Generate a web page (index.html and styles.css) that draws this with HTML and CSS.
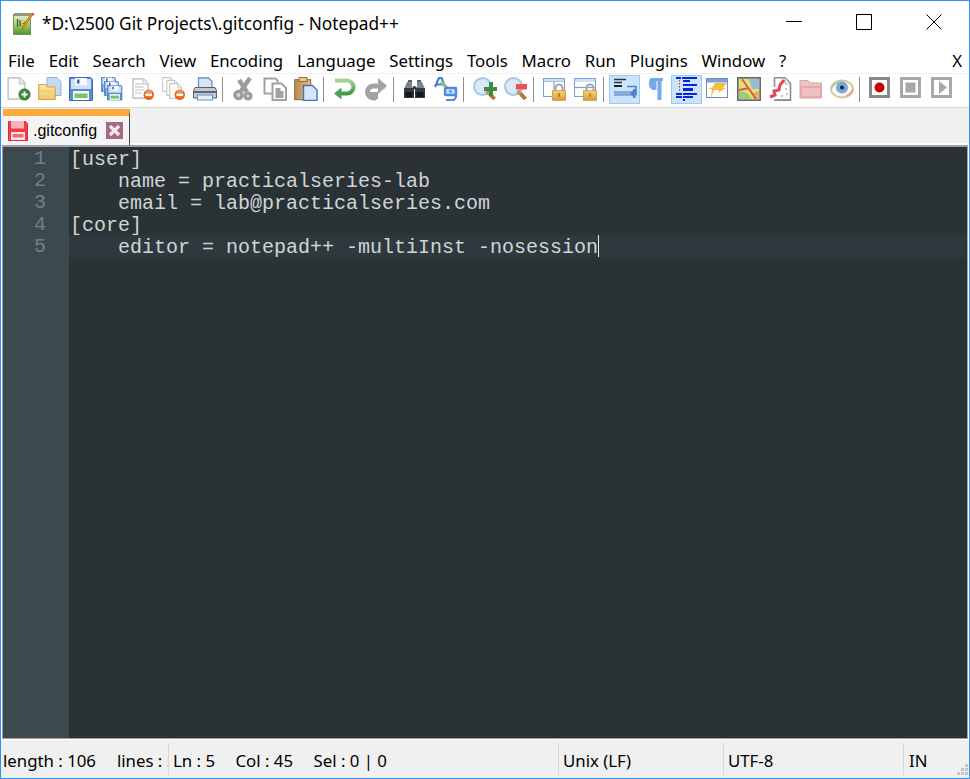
FILE: index.html
```html
<!DOCTYPE html>
<html lang="en">
<head>
<meta charset="utf-8">
<title>*D:\2500 Git Projects\.gitconfig - Notepad++</title>
<link rel="stylesheet" href="styles.css">
</head>
<body>
<svg class="defs" width="0" height="0" aria-hidden="true">
  <defs>
    <linearGradient id="appg" x1="0" y1="0" x2="0" y2="1"><stop offset="0" stop-color="#e8efe0"/><stop offset=".45" stop-color="#b4d26a"/><stop offset="1" stop-color="#3f9a2e"/></linearGradient>
    <linearGradient id="lockg" x1="0" y1="0" x2="0" y2="1"><stop offset="0" stop-color="#f4d77d"/><stop offset="1" stop-color="#d99a36"/></linearGradient>
    <linearGradient id="fold" x1="0" y1="0" x2="0" y2="1"><stop offset="0" stop-color="#fdeaa8"/><stop offset="1" stop-color="#f3c766"/></linearGradient>
    <linearGradient id="clip" x1="0" y1="0" x2="1" y2="0"><stop offset="0" stop-color="#b9884f"/><stop offset="1" stop-color="#e7bd84"/></linearGradient>
    <linearGradient id="grn" x1="0" y1="0" x2="0" y2="1"><stop offset="0" stop-color="#a6d39a"/><stop offset="1" stop-color="#3f9a48"/></linearGradient>
    <symbol id="floppy" viewBox="0 0 24 24">
      <path d="M.5.5h21l2 2v21H.5z" fill="#5a8bd0" stroke="#3d6cb4"/>
      <rect x="2" y="2" width="20" height="10" fill="#cfe0f6"/>
      <rect x="6" y="1" width="12" height="7.5" fill="#f4f8fd"/>
      <rect x="8" y="2.5" width="2.5" height="4" fill="#44659a"/>
      <rect x="4" y="14" width="16" height="9" fill="#f4f8f0"/>
      <rect x="5.500" y="16.500" width="13" height="4.500" fill="#7cc26b"/>
    </symbol>
    <symbol id="page" viewBox="0 0 16 20">
      <path d="M.8.8h10l4.400 4.400v14H.8z" fill="#fff" stroke="#c9c9c9" stroke-width="1.500"/>
      <path d="M10.500 1v5h5" fill="#ececec" stroke="#c9c9c9"/>
    </symbol>
    <symbol id="nogo" viewBox="0 0 12 12">
      <circle cx="6" cy="6" r="5.500" fill="#e4671a"/>
      <circle cx="6" cy="4.500" r="3.500" fill="#f0935a"/>
      <rect x="2.500" y="5" width="7" height="2.200" fill="#fff"/>
    </symbol>
    <symbol id="lock" viewBox="0 0 16 20">
      <path d="M4 9V5.500a4 4 0 0 1 8 0V9" fill="none" stroke="#a8a8a8" stroke-width="2.400"/>
      <rect x=".5" y="8.500" width="15" height="11" fill="url(#lockg)" stroke="#d49a3c"/>
      <rect x="6.800" y="11.500" width="2.400" height="4" fill="#b57e2b"/>
    </symbol>
    <symbol id="lens" viewBox="0 0 24 24">
      <circle cx="9.500" cy="9.500" r="8.500" fill="#dbe8f8" stroke="#a9c6ea" stroke-width="2"/>
      <path d="M14 14l7.500 8" stroke="#a87744" stroke-width="4"/>
      <circle cx="15" cy="15.500" r="2.400" fill="#c29a6a"/>
    </symbol>
  </defs>
</svg>
<div class="window">
  <header class="titlebar">
    <svg class="appicon" viewBox="0 0 22 23" width="22" height="23">
      <rect x=".5" y="2.500" width="17" height="20" fill="url(#appg)" stroke="#7c8a66"/>
      <rect x="1" y="1" width="16" height="3" fill="#8f9a80"/>
      <path d="M4.500 7v8M7 8v6" stroke="#454f3c" stroke-width="1.200"/>
      <path d="M9.500 11.500h4M11.500 9.500v4" stroke="#6a7a55" stroke-width=".9"/>
      <path d="M20.500 1.500L11 16l-2.500 2.500L9.500 15l9-14z" fill="#e9a32c" stroke="#a86f1d" stroke-width=".8"/>
      <path d="M19 .8l2.500 1.500-1 1.500L18 2.300z" fill="#d8574a"/>
    </svg>
    <div class="title">*D:\2500 Git Projects\.gitconfig - Notepad++</div>
    <div class="controls">
      <div class="ctl"><svg viewBox="0 0 16 16" width="16" height="16"><path d="M0 7.500h16" stroke="#000"/></svg></div>
      <div class="ctl"><svg viewBox="0 0 16 16" width="16" height="16"><rect x=".5" y=".5" width="15" height="15" fill="none" stroke="#000"/></svg></div>
      <div class="ctl"><svg viewBox="0 0 16 16" width="16" height="16"><path d="M.5.500l15 15M15.500.5l-15 15" stroke="#000" fill="none"/></svg></div>
    </div>
  </header>

  <nav class="menubar">
    <span>File</span><span>Edit</span><span>Search</span><span>View</span><span>Encoding</span><span>Language</span><span>Settings</span><span>Tools</span><span>Macro</span><span>Run</span><span>Plugins</span><span>Window</span><span>?</span>
    <span class="menu-x">X</span>
  </nav>

  <div class="toolbar">
    <button class="tb" aria-label="New"><svg viewBox="0 0 24 24"><use href="#page" x="0" y="0" width="19" height="23"/><circle cx="17.500" cy="17.500" r="5.500" fill="#3f8a3a" stroke="#2c6a2c"/><path d="M14.500 17.500h6M17.500 14.500v6" stroke="#fff" stroke-width="1.800"/></svg></button>
    <button class="tb" aria-label="Open"><svg viewBox="0 0 24 24"><path d="M9 .5h10l4 4v14H9z" fill="#c4d9f3" stroke="#8fb3e0"/><path d="M.7 10.500V7.500h7l1.500 2.500h8v12.500H.7z" fill="url(#fold)" stroke="#dca24a" stroke-width="1.200"/><path d="M1 14h16.500" stroke="#eec067"/></svg></button>
    <button class="tb" aria-label="Save"><svg viewBox="0 0 24 24"><use href="#floppy"/></svg></button>
    <button class="tb" aria-label="Save All"><svg viewBox="0 0 24 24"><use href="#floppy" x="1" y="0" width="15" height="15"/><use href="#floppy" x="4" y="4" width="15" height="15"/><use href="#floppy" x="7" y="8" width="15.500" height="15.500"/></svg></button>
    <button class="tb" aria-label="Close"><svg viewBox="0 0 24 24"><use href="#page" x="1" y="1" width="17" height="21"/><path d="M4 7h7M4 10h9M4 13h9M4 16h7" stroke="#bdbdbd" stroke-width="1.200"/><use href="#nogo" x="12" y="12" width="11.500" height="11.500"/></svg></button>
    <button class="tb" aria-label="Close All"><svg viewBox="0 0 24 24"><use href="#page" x="0" y="0" width="12" height="15"/><use href="#page" x="4" y="3" width="13" height="16"/><use href="#page" x="7" y="6" width="13" height="16"/><use href="#nogo" x="12" y="12" width="11.500" height="11.500"/></svg></button>
    <button class="tb" aria-label="Print"><svg viewBox="0 0 24 24"><path d="M5.500 1h10l3.500 3.500V12h-13.500z" fill="#d8e6f7" stroke="#5f94d2" stroke-width="1.300"/><path d="M2 10.500h20l1.500 3v7.500H.5v-7.500z" fill="#c9c9c9" stroke="#5e5e5e"/><path d="M1 14h22v2H1z" fill="#5e6770"/><rect x="4.500" y="18" width="15" height="5" fill="#e8f0f8" stroke="#5f94d2"/></svg></button>
    <span class="sep"></span>
    <button class="tb" aria-label="Cut"><svg viewBox="0 0 24 24"><path d="M18 1L9 14M7 3l8 12" stroke="#9c9c9c" stroke-width="4.400" fill="none"/><circle cx="6.500" cy="18" r="3.600" fill="#d8d8d8" stroke="#9c9c9c" stroke-width="3.400"/><circle cx="16" cy="19" r="3" fill="#d8d8d8" stroke="#9c9c9c" stroke-width="3.200"/></svg></button>
    <button class="tb" aria-label="Copy"><svg viewBox="0 0 24 24"><path d="M1.500 1.500h11l2 2v13h-13z" fill="#fff" stroke="#a2a2a2" stroke-width="2"/><path d="M9.500 6.500h9l4.500 4.500v12h-13.500z" fill="#fff" stroke="#a2a2a2" stroke-width="2"/><path d="M12.500 11h5v3h3v7h-8z" fill="#a2a2a2"/></svg></button>
    <button class="tb" aria-label="Paste"><svg viewBox="0 0 24 24"><rect x=".7" y="2.700" width="16" height="20" fill="url(#clip)" stroke="#8f6a3e"/><rect x="5" y="0.500" width="8" height="4" fill="#ebcf76" stroke="#8f7440"/><path d="M9.500 8.500h9l4.500 4.500v10.500H9.500z" fill="#d8e6f9" stroke="#3f74c2" stroke-width="1.400"/></svg></button>
    <span class="sep"></span>
    <button class="tb" aria-label="Undo"><svg viewBox="0 0 24 24"><path d="M2 3.500h12a6.500 6.500 0 0 1 0 13H7" fill="none" stroke="url(#grn)" stroke-width="4.200"/><path d="M8.500 10.500v12L1 16.500z" fill="#4aa254"/></svg></button>
    <button class="tb" aria-label="Redo"><svg viewBox="0 0 24 24"><path d="M21 9H9.500a6 6 0 0 0 0 12h3" fill="none" stroke="#a3a3a3" stroke-width="5"/><path d="M14 1l9 8-9 8z" fill="#a3a3a3"/><rect x="5" y="15" width="9" height="7" fill="#a3a3a3"/></svg></button>
    <span class="sep"></span>
    <button class="tb" aria-label="Find"><svg viewBox="0 0 24 24"><path d="M4 5h5v5h5V5h5l3 7H1z" fill="#7b848a"/><path d="M5 3h4v2H5zM14 3h4v2h-4z" fill="#5a6066"/><path d="M1 11h10v10H1zM12 11h10v10H12z" fill="#33393e"/><path d="M2.500 15h7v5h-7zM13.500 15h7v5h-7z" fill="#15181a"/><path d="M10.500 9h2v3h-2z" fill="#222"/></svg></button>
    <button class="tb" aria-label="Replace"><svg viewBox="0 0 24 24"><path d="M1 10L5 .8h2.500l3 7.500M2.500 7.500h7" fill="none" stroke="#3f80d8" stroke-width="2.200"/><path d="M7 5l7 7" stroke="#8fc07a" stroke-width="3.200"/><rect x="11" y="11" width="11" height="7" rx="1" fill="#cfe0f6" stroke="#4e8be0" stroke-width="2.400"/><path d="M22 10v10l-2 3h-8M15 14.500h3" fill="none" stroke="#4e8be0" stroke-width="2.200"/></svg></button>
    <span class="sep"></span>
    <button class="tb" aria-label="Zoom In"><svg viewBox="0 0 24 24"><use href="#lens"/><path d="M11 10h5V5h4v5h4v4h-4v5h-4v-5h-5z" fill="#3e8a40"/></svg></button>
    <button class="tb" aria-label="Zoom Out"><svg viewBox="0 0 24 24"><use href="#lens"/><rect x="12" y="7" width="11" height="5.500" fill="#ef4e58"/></svg></button>
    <span class="sep"></span>
    <button class="tb" aria-label="Synchronize Vertical"><svg viewBox="0 0 24 24"><rect x=".5" y="1.500" width="21" height="18" fill="#fff" stroke="#7fa0d4"/><path d="M1 4.500h20M11 2v17" stroke="#7fa0d4" stroke-width="1.200"/><rect x="1" y="2" width="20" height="2.500" fill="#d2e0f3"/><use href="#lock" x="9" y="6" width="14" height="18"/></svg></button>
    <button class="tb" aria-label="Synchronize Horizontal"><svg viewBox="0 0 24 24"><rect x=".5" y="1.500" width="21" height="18" fill="#fff" stroke="#7fa0d4"/><path d="M1 10.500h20" stroke="#7fa0d4" stroke-width="1.200"/><rect x="1" y="2" width="20" height="3" fill="#d2e0f3"/><use href="#lock" x="9" y="6" width="14" height="18"/></svg></button>
    <span class="sep"></span>
    <button class="tb on" aria-label="Word Wrap"><svg viewBox="0 0 24 24"><path d="M1 2.500h12M1 5.500h8" stroke="#333" stroke-width="1.300"/><rect x="1" y="8" width="8" height="2" fill="#222"/><path d="M14 9.500h9v9" fill="none" stroke="#4a82cc" stroke-width="1.600"/><rect x="1" y="14" width="18" height="5" fill="#86abd9"/><path d="M17 16.500l3.500-3.500v7z" fill="#4a82cc"/><rect x="20" y="12" width="2.500" height="9" fill="#4a82cc"/></svg></button>
    <button class="tb" aria-label="Show All Characters"><svg viewBox="0 0 24 24"><path d="M7 1h12v3h-1.500v19h-4V4h-1v9H10C7 13 5 10.500 5 7s1-6 2-6z" fill="#74aae8"/></svg></button>
    <button class="tb on" aria-label="Indent Guide"><svg viewBox="0 0 24 24"><g fill="#0a24e0"><rect x="1" y="0" width="5" height="2"/><rect x="7" y="0" width="15" height="2"/><rect x="8" y="3" width="7" height="2"/><rect x="8" y="7" width="14" height="2"/><rect x="8" y="11" width="10" height="3"/><rect x="1" y="16" width="6" height="2"/><rect x="8" y="16" width="14" height="2"/><rect x="1" y="19" width="6" height="2"/><rect x="8" y="19" width="10" height="2"/><rect x="8" y="22" width="2" height="2"/></g><path d="M4.500 3v12" stroke="#d83030" stroke-dasharray="1.500 1.500"/></svg></button>
    <button class="tb" aria-label="Document Map"><svg viewBox="0 0 24 24"><rect x=".5" y="1.500" width="21" height="19" fill="#fff" stroke="#6b8fc4"/><rect x="1" y="2" width="20" height="3.500" fill="#7ea2d2"/><path d="M9 6h12l-4 5h3l-8 5 1-3H8l-3 8 1-9H2l5-2z" fill="#f1bf3e"/></svg></button>
    <button class="tb" aria-label="Document Map View"><svg viewBox="0 0 24 24"><rect x=".8" y=".8" width="22.400" height="22.400" fill="#dfe27a" stroke="#5c5c78" stroke-width="1.500"/><path d="M12 2h10v10H15z" fill="#98bad8"/><path d="M2 14l8 2 5 6H2z" fill="#9fcb74"/><path d="M16 16l6-2v8h-6z" fill="#e4b25c"/><path d="M5 2l14 20M2 13l10-2" stroke="#dd5b4e" stroke-width="2" fill="none"/></svg></button>
    <button class="tb" aria-label="Function List"><svg viewBox="0 0 24 24"><path d="M6 .8h11l5.500 5.500v17H6" fill="#fff" stroke="#8c8c8c" stroke-width="1.600"/><path d="M6.500 1v9M7 23h15" stroke="#8c8c8c" stroke-width="1.600"/><path d="M17 1v6h5" fill="#eee" stroke="#b5b5b5"/><path d="M2 20l5-2-1-4 5-1 1-5 4-5" fill="none" stroke="#e24a55" stroke-width="3"/><path d="M18 11v2M19 16v2M14 18v2" stroke="#a8c0a0" stroke-width="1.500"/></svg></button>
    <button class="tb" aria-label="Folder as Workspace"><svg viewBox="0 0 24 24"><path d="M1 5.500V3.500h8l2 2.500h11.500v15H1z" fill="#eec4c4" stroke="#d8a0a0"/><path d="M1.500 9h21v11.500h-21z" fill="#e6a9a9"/><path d="M3 11h18v8H3z" fill="#efc2c2"/></svg></button>
    <button class="tb" aria-label="Monitoring"><svg viewBox="0 0 24 24"><ellipse cx="12" cy="12" rx="11" ry="8.500" fill="#f8faf2" stroke="#d8c49c" stroke-width="1.800"/><path d="M1 12c3-6 7-8 11-8" stroke="#a9cdb0" stroke-width="1.800" fill="none"/><path d="M16 19c3-1 6-4 7-7" stroke="#e2a286" stroke-width="1.800" fill="none"/><circle cx="12" cy="10.500" r="6" fill="#7da6d8"/><circle cx="12" cy="10.500" r="2" fill="#16233a"/></svg></button>
    <span class="sep"></span>
    <button class="tb" aria-label="Start Recording"><svg viewBox="0 0 24 24"><rect x="1.500" y="1.500" width="18" height="18" fill="#fff" stroke="#888" stroke-width="3"/><circle cx="10.500" cy="10.500" r="5" fill="#c90000"/></svg></button>
    <button class="tb" aria-label="Stop Recording"><svg viewBox="0 0 24 24"><rect x="1.500" y="1.500" width="18" height="18" fill="#fff" stroke="#a8a8a8" stroke-width="3"/><rect x="5.500" y="5.500" width="10" height="10" fill="#a8a8a8"/></svg></button>
    <button class="tb" aria-label="Playback"><svg viewBox="0 0 24 24"><rect x="1.500" y="1.500" width="18" height="18" fill="#fff" stroke="#a8a8a8" stroke-width="3"/><path d="M8 4v13l8-6.500z" fill="#a8a8a8"/></svg></button>
  </div>

  <div class="tabbar">
    <div class="tab">
      <svg class="tabicon" viewBox="0 0 20 20" width="20" height="20"><path d="M.5.500h17l2 2v17H.5z" fill="#ee3d49" stroke="#dc2f3c"/><rect x="3" y="0" width="13" height="7.500" fill="#f9b3b8"/><rect x="3" y="11" width="14" height="8" fill="#fbe3e4"/><rect x="4.500" y="13" width="11" height="3.500" fill="#f06c75"/></svg>
      <span class="tabname">.gitconfig</span>
      <svg class="tabclose" viewBox="0 0 17 17" width="17" height="17"><rect width="17" height="17" fill="#a56b85"/><path d="M4 4l9 9M13 4l-9 9" stroke="#f3e6ec" stroke-width="3.200"/></svg>
    </div>
  </div>

  <main class="frame">
    <div class="editor">
      <div class="gutter"><div class="num">1</div><div class="num">2</div><div class="num">3</div><div class="num">4</div><div class="num">5</div></div>
      <div class="code">
        <div class="ln">[user]</div>
        <div class="ln">    name = practicalseries-lab</div>
        <div class="ln">    email = lab@practicalseries.com</div>
        <div class="ln">[core]</div>
        <div class="ln current">    editor = notepad++ -multiInst -nosession<span class="caret"></span></div>
      </div>
    </div>
  </main>

  <footer class="status">
    <div class="cell c1"><span>length : 106</span><span>lines : 5</span></div>
    <div class="cell c2"><span>Ln : 5</span><span>Col : 45</span><span>Sel : 0 | 0</span></div>
    <div class="cell c3">Unix (LF)</div>
    <div class="cell c4">UTF-8</div>
    <div class="cell c5">IN<svg class="grip" viewBox="0 0 11 11" width="11" height="11"><path d="M8 0h3v3H8zM4 4h3v3H4zM8 4h3v3H8zM0 8h3v3H0zM4 8h3v3H4zM8 8h3v3H8z" fill="#c6c6c6"/></svg></div>
  </footer>
</div>
</body>
</html>
```
FILE: styles.css
```css
* { box-sizing: border-box; }
html, body { margin: 0; padding: 0; background: #f0f0f0; }
.defs { position: absolute; }
.window {
  width: 970px;
  height: 779px;
  display: flex;
  flex-direction: column;
  border: 1px solid #2f94f3;
  font-family: "Noto Sans", "Open Sans", sans-serif;
  font-size: 16.8px;
  color: #000;
  background: #f0f0f0;
  overflow: hidden;
}
.titlebar {
  height: 44px;
  flex: none;
  display: flex;
  align-items: center;
  background: #fff;
  padding-left: 12px;
}
.appicon { flex: none; margin-top: 1px; }
.title { margin-left: 7px; font-size: 17.25px; white-space: nowrap; }
.controls { margin-left: auto; display: flex; }
.ctl { width: 70px; height: 44px; display: flex; align-items: center; justify-content: center; padding-bottom: 2px; }
.menubar {
  height: 28px;
  flex: none;
  display: flex;
  align-items: center;
  gap: 13.8px;
  padding: 2px 7px 0 7px;
  background: #fff;
  white-space: nowrap;
}
.menu-x { margin-left: auto; }
.toolbar {
  height: 35px;
  flex: none;
  display: flex;
  align-items: center;
  padding: 0 0 3px 2px;
  background: #fff;
  border-top: 1px solid #f0f0f0;
  border-bottom: 1px solid #d9d9d9;
}
.tb {
  flex: none;
  width: 31px;
  height: 29px;
  padding: 0;
  margin: 0;
  border: 1px solid transparent;
  background: none;
  display: flex;
  align-items: center;
  justify-content: center;
}
.tb svg { width: 24px; height: 24px; display: block; }
.tb.on { background: #cce4fb; border-color: #99c9f5; }
.sep { flex: none; width: 1px; height: 25px; margin: 0 5px 0 2px; background: #8f8f8f; }
.tabbar {
  height: 37px;
  flex: none;
  display: flex;
  padding: 1px 0 0 2px;
  background: #f0f0f0;
  border-bottom: 2px solid #fff;
}
.tab {
  width: 127px;
  height: 36px;
  display: flex;
  align-items: center;
  padding-left: 5px;
  background: #f4f4f4;
  border-top: 7px solid #ffab3c;
  border-right: 1px solid #3f4a50;
  font-family: "Liberation Sans", Arial, sans-serif;
  font-size: 16px;
}
.tabicon { flex: none; }
.tabname { margin-left: 5px; white-space: nowrap; }
.tabclose { flex: none; margin-left: 9px; }
.frame {
  flex: 1;
  min-height: 0;
  padding: 0 1px 1px 1px;
  background: #fff;
}
.editor {
  height: 100%;
  display: flex;
  border: 1px solid #a0a0a0;
  border-top-width: 2px;
  background: #2a3235;
  font-family: "Liberation Mono", "Courier New", monospace;
  font-size: 20px;
  overflow: hidden;
}
.gutter {
  width: 66px;
  flex: none;
  background: #3c494f;
  color: #6f8187;
  text-align: right;
  padding-right: 23px;
}
.num { height: 22px; line-height: 24px; }
.code { flex: 1; padding-left: 1px; color: #cdd6d8; }
.ln { height: 22px; line-height: 26px; white-space: pre; }
.current { background: #2f393d; margin-left: -1px; padding-left: 1px; }
.caret { display: inline-block; width: 1px; height: 22px; background: #e8e8e8; vertical-align: top; }
.status {
  height: 38px;
  flex: none;
  display: flex;
  align-items: center;
  background: #f0f0f0;
  white-space: nowrap;
}
.cell { height: 32px; display: flex; align-items: center; overflow: hidden; position: relative; padding-top: 3px; }
.c1 { width: 167px; padding-left: 2px; gap: 21px; }
.c2 { width: 390px; padding-left: 4px; gap: 20.5px; border-left: 1px solid #d6d6d6; }
.c3 { width: 165px; padding-left: 4px; border-left: 1px solid #d6d6d6; }
.c4 { width: 180px; padding-left: 4px; border-left: 1px solid #d6d6d6; }
.c5 { flex: 1; padding-left: 5px; border-left: 1px solid #d6d6d6; }
.grip { position: absolute; right: 1px; bottom: 0; }
```
